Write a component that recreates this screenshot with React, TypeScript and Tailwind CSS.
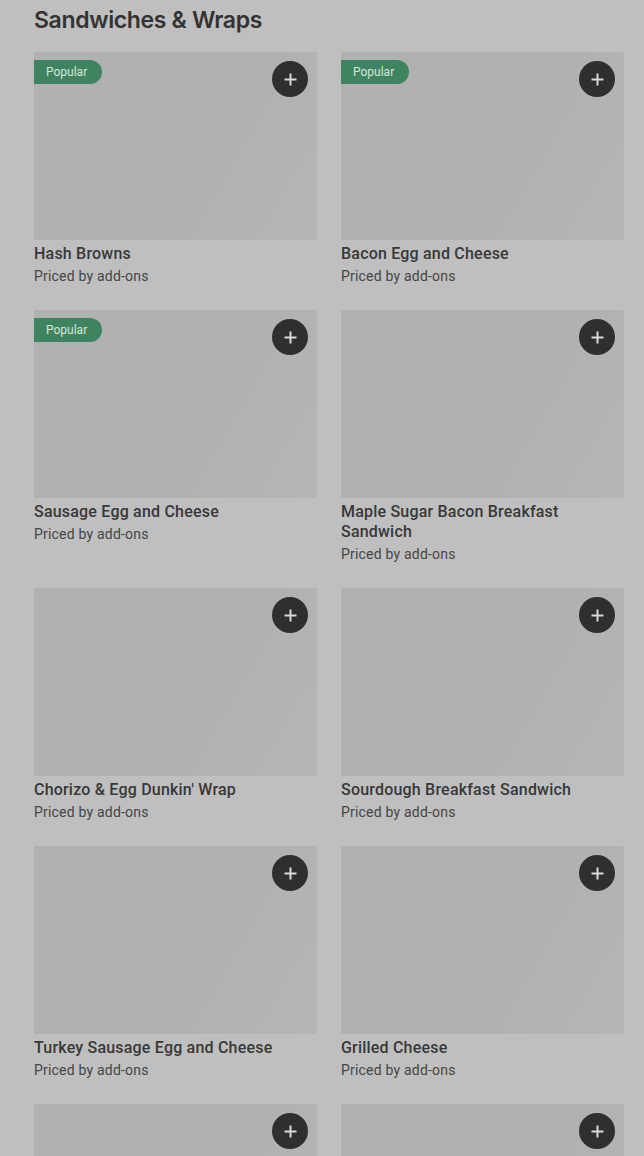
import React from "react";

type Item = { name: string; popular?: boolean };

const items: Item[] = [
  { name: "Hash Browns", popular: true },
  { name: "Bacon Egg and Cheese", popular: true },
  { name: "Sausage Egg and Cheese", popular: true },
  { name: "Maple Sugar Bacon Breakfast Sandwich" },
  { name: "Chorizo & Egg Dunkin' Wrap" },
  { name: "Sourdough Breakfast Sandwich" },
  { name: "Turkey Sausage Egg and Cheese" },
  { name: "Grilled Cheese" },
  { name: "Ham Egg and Cheese" },
  { name: "Veggie Egg White Omelet" },
];

function Plus() {
  return (
    <svg width="13" height="13" viewBox="0 0 13 13" fill="none">
      <path d="M6.5 1.5v10M1.5 6.5h10" stroke="#d9d9d9" strokeWidth="2" strokeLinecap="square" />
    </svg>
  );
}

function Card({ item }: { item: Item }) {
  return (
    <div className="flex flex-col">
      <div className="relative h-[188px] bg-[linear-gradient(120deg,#b1b1b1_0%,#b1b1b1_60%,#b6b6b6_100%)]">
        {item.popular && (
          <div className="absolute left-0 top-2 flex h-6 w-[68px] items-center rounded-r-full bg-[#3f8461] pl-3 text-[12px] leading-none text-[#d6e6dd] [font-family:Roboto,sans-serif]">
            Popular
          </div>
        )}
        <button className="absolute right-[9px] top-[9px] flex h-9 w-9 items-center justify-center rounded-full bg-[#2f2f2f]">
          <Plus />
        </button>
      </div>
      <div className="pt-[4px] [font-family:Roboto,sans-serif]">
        <div className="mb-[2px] text-[16px] font-medium leading-5 tracking-[0.2px] text-[#383838]">{item.name}</div>
        <div className="text-[14px] leading-5 tracking-[0.2px] text-[#454545]">Priced by add-ons</div>
      </div>
    </div>
  );
}

export default function App() {
  return (
    <div className="min-h-screen w-full overflow-hidden bg-[#bfbfbf] pl-[34px] pr-[20px] pt-1">
      <h2 className="mb-4 text-[23px] font-semibold leading-8 tracking-[-0.35px] text-[#333333] [font-family:Inter,sans-serif]">
        Sandwiches &amp; Wraps
      </h2>
      <div className="grid grid-cols-2 gap-x-6 gap-y-6">
        {items.map((it) => (
          <Card key={it.name} item={it} />
        ))}
      </div>
    </div>
  );
}
